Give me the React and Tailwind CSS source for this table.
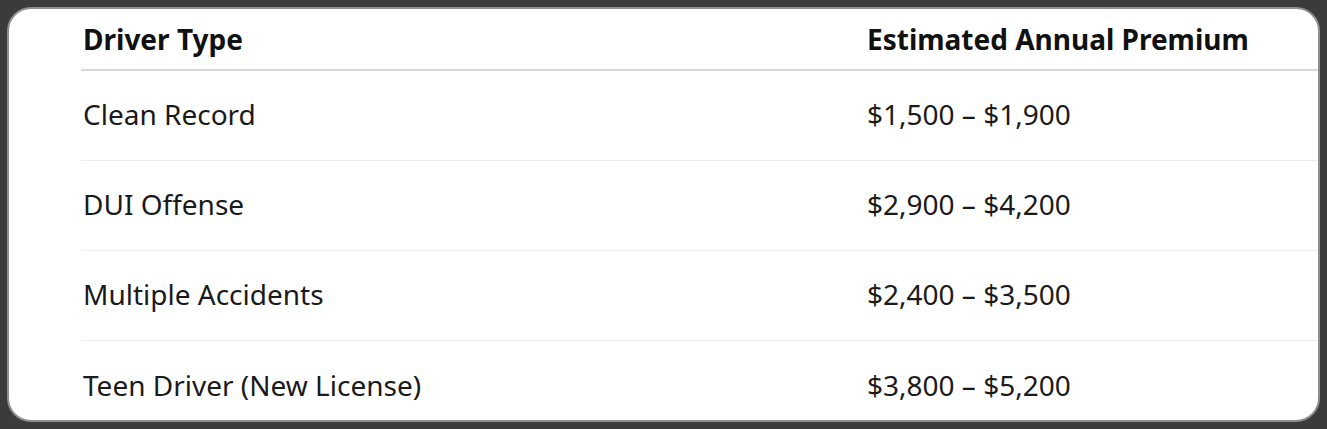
export default function App() {
  const rows = [
    ["Clean Record", "$1,500 – $1,900"],
    ["DUI Offense", "$2,900 – $4,200"],
    ["Multiple Accidents", "$2,400 – $3,500"],
    ["Teen Driver (New License)", "$3,800 – $5,200"],
  ];
  return (
    <div className="w-[1327px] h-[429px] bg-[#3b3b3b] p-[7px]" style={{ fontFamily: '"Noto Sans", "Open Sans", sans-serif' }}>
      <div className="h-full rounded-[24px] border-2 border-[#8e8e8e] bg-white overflow-hidden">
        <div className="ml-[72px] w-[1300px]">
          <div className="flex h-[62px] items-center border-b-2 border-[#d9d9d9] text-[28px] font-bold text-[#111]">
            <div className="w-[786px] pl-[2px]">Driver Type</div>
            <div>Estimated Annual Premium</div>
          </div>
          {rows.map((r, i) => (
            <div key={i} className={"flex h-[90px] items-center pb-[3px] text-[28px] text-[#1a1a1a] " + (i < rows.length - 1 ? "border-b border-[#ededed]" : "")}>
              <div className="w-[786px] pl-[2px]">{r[0]}</div>
              <div>{r[1]}</div>
            </div>
          ))}
        </div>
      </div>
    </div>
  );
}
